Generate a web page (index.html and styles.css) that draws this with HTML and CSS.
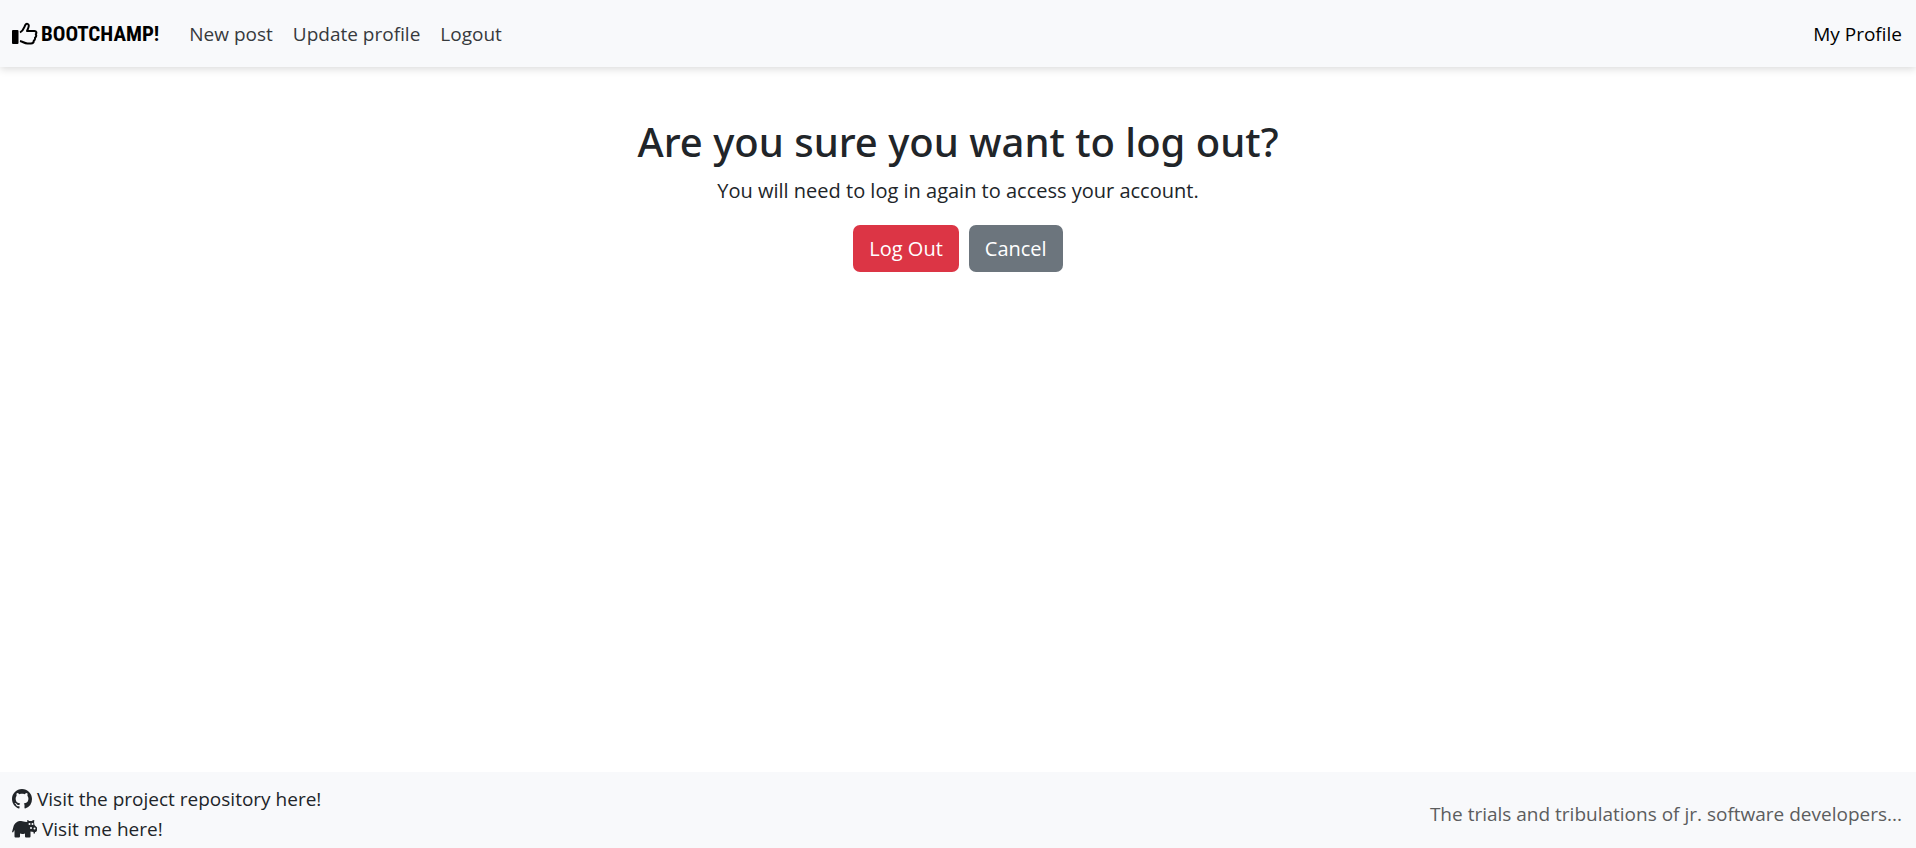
FILE: index.html
```html
<!DOCTYPE html>
<html lang="en">
<head>
<meta charset="utf-8">
<title>Bootchamp - Log out</title>
<link rel="stylesheet" href="styles.css">
</head>
<body>
<header class="navbar">
  <a class="brand" href="#">
    <svg class="brand-icon" viewBox="0 0 26 24" aria-hidden="true">
      <rect x="0" y="8" width="6.500" height="14" rx="1"/>
      <path d="M8 10.500C11.500 8.500 12 5.500 13.300 3C14.300 1 17.200 1.500 16.700 4.300C16.400 6.300 15.500 7.500 15 9H22.500C24.500 9 24.800 11 23.800 12.200C24.500 13.500 24 15 23 15.700C23.300 17 22.700 18.200 21.800 18.700C21.800 20.500 20.800 21.500 19 21.500H15.500C12.300 21.500 11 19.500 8 19" fill="none" stroke="currentColor" stroke-width="2" stroke-linejoin="round"/>
    </svg>
    <span>BOOTCHAMP!</span>
  </a>
  <nav class="nav-links">
    <a href="#">New post</a>
    <a href="#">Update profile</a>
    <a href="#">Logout</a>
  </nav>
  <a class="profile" href="#">My Profile</a>
</header>
<main class="content">
  <h1>Are you sure you want to log out?</h1>
  <p>You will need to log in again to access your account.</p>
  <form class="actions">
    <button class="btn btn-danger" type="submit">Log Out</button>
    <a class="btn btn-secondary" href="#">Cancel</a>
  </form>
</main>
<footer class="footer">
  <div class="footer-links">
    <a href="#">
      <svg class="icon-github" viewBox="0 0 16 16" aria-hidden="true"><path d="M8 0C3.580 0 0 3.580 0 8c0 3.540 2.290 6.530 5.470 7.590.4.070.55-.17.55-.38 0-.19-.01-.82-.01-1.490-2.010.37-2.530-.49-2.690-.94-.09-.23-.48-.94-.82-1.130-.28-.15-.68-.52-.01-.53.63-.01 1.080.58 1.230.82.72 1.210 1.870.87 2.330.66.07-.52.28-.87.51-1.070-1.780-.2-3.640-.89-3.640-3.950 0-.87.31-1.590.82-2.150-.08-.2-.36-1.020.08-2.120 0 0 .67-.21 2.200.82.64-.18 1.320-.27 2-.27s1.360.09 2 .27c1.530-1.040 2.200-.82 2.200-.82.44 1.100.16 1.920.08 2.120.51.56.82 1.270.82 2.150 0 3.070-1.870 3.750-3.650 3.950.29.25.54.73.54 1.480 0 1.070-.01 1.930-.01 2.200 0 .21.15.46.55.38A8.010 8.010 0 0 0 16 8c0-4.420-3.580-8-8-8"/></svg>
      <span>Visit the project repository here!</span>
    </a>
    <a href="#">
      <svg class="icon-hippo" viewBox="0 0 25 18" aria-hidden="true">
        <path d="M0 12L1.500 6.500C2.500 3 5.500 1 9 1C11 1 12 2 14.500 2L15.500 1.500L15 .5L16 0L17 1H20L21 0L22.500 .5L22 2L22.500 5L25 7.500V10C25 11.500 24 12 23 12V13.500H21.500V12L18.500 11.500V16.500Q18.500 17.500 17.500 17.500H14Q13 17.500 13 16.500V13.500C10.500 14.300 9 14 8 13.500V16.500Q8 17.500 7 17.500H3.500Q2.500 17.500 2.500 16.500V10L1 12.500Z"/>
        <g class="hippo-face"><circle cx="17.500" cy="4" r="1"/><circle cx="20.500" cy="4" r="1"/><circle cx="19" cy="8" r="1"/><circle cx="22.500" cy="8.500" r="1"/></g>
      </svg>
      <span>Visit me here!</span>
    </a>
  </div>
  <p class="tagline">The trials and tribulations of jr. software developers...</p>
</footer>
</body>
</html>
```
FILE: styles.css
```css
* { box-sizing: border-box; }
body {
  margin: 0;
  min-height: 100vh;
  display: flex;
  flex-direction: column;
  font-family: "Open Sans", sans-serif;
  font-size: 20px;
  line-height: 30px;
  color: #212529;
  background: #fff;
}
a { color: inherit; text-decoration: none; }
svg { fill: currentColor; flex: none; }
.navbar {
  display: flex;
  align-items: center;
  height: 67px;
  padding: 0 14px 0 12px;
  background: #f8f9fb;
  box-shadow: 0 2px 8px rgba(0, 0, 0, .15);
  font-size: 19px;
}
.brand {
  display: flex;
  align-items: center;
  gap: 3px;
  margin-right: 30px;
  color: #000;
  font-family: "Roboto Condensed", Roboto, sans-serif;
  font-size: 21px;
  font-weight: 700;
}
.brand-icon { width: 26px; height: 24px; }
.nav-links { display: flex; gap: 20px; color: #373a3d; }
.profile { margin-left: auto; color: #000; }
.content { flex: 1; padding: 51px 20px; text-align: center; }
h1 {
  margin: 0 0 10px;
  font-family: "Noto Sans", sans-serif;
  font-size: 40px;
  line-height: 48px;
  font-weight: 500;
}
p { margin: 0 0 19px; }
.actions { display: flex; justify-content: center; gap: 10px; }
.btn {
  padding: 9px 16px 8px;
  border: 0;
  border-radius: 7px;
  color: #fff;
  font: inherit;
}
.btn-danger { background: #dc3545; }
.btn-secondary { background: #6c757d; }
.footer {
  display: flex;
  align-items: center;
  justify-content: space-between;
  padding: 12px 14px 4px 12px;
  background: #f8f9fb;
  font-size: 19px;
}
.footer-links a { display: flex; align-items: center; gap: 5px; }
.icon-github { width: 20px; height: 20px; }
.icon-hippo { width: 25px; height: 18px; }
.hippo-face { fill: #f8f9fb; }
.tagline { margin: 0; color: #5c5d5e; }
```
